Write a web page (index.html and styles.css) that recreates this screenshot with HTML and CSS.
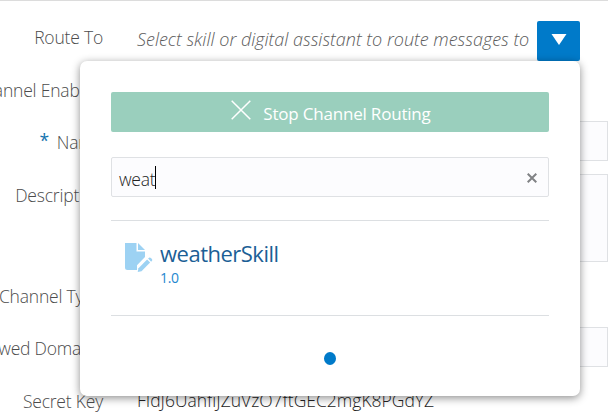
FILE: index.html
```html
<!DOCTYPE html>
<html lang="en">
<head>
<meta charset="utf-8">
<title>Channel</title>
<link rel="stylesheet" href="styles.css">
</head>
<body>
<main class="form">
  <div class="row row-route">
    <label class="label">Route To</label>
    <div class="select"><span class="placeholder">Select skill or digital assistant to route messages to</span>
      <button class="drop" aria-label="Open"><svg width="16" height="11" viewBox="0 0 16 11"><path d="M.5 0h15L8 11z" fill="#fff"/></svg></button>
    </div>
  </div>
  <div class="row row-switch"><label class="label">Channel Enabled</label></div>
  <div class="row"><label class="label"><span class="star">*</span>Name</label><div class="field"></div></div>
  <div class="row row-area"><label class="label">Description</label><div class="field"></div></div>
  <div class="row row-type"><label class="label">Channel Type</label></div>
  <div class="row"><label class="label">Allowed Domains</label><div class="field"></div></div>
  <div class="row"><label class="label">Secret Key</label><div class="secret">FIdJ6UahfiJZuVzO7ftGEC2mgK8PGdYZ</div></div>
</main>
<section class="popup">
  <button class="stop"><svg width="20" height="20" viewBox="0 0 20 20"><path d="M.7.7l18.6 18.6M19.3.7L.7 19.3" stroke="#fff" stroke-width="1.5"/></svg><span>Stop Channel Routing</span></button>
  <div class="search"><span class="query">weat</span><i class="caret"></i>
    <svg class="clear" width="10" height="10" viewBox="0 0 10 10"><path d="M.7.7l8.6 8.6M9.3.7L.7 9.3" stroke="#808285" stroke-width="2"/></svg>
  </div>
  <div class="result">
    <svg class="doc" width="28" height="31" viewBox="0 0 28 31"><g fill="#9dd2f3"><path d="M0 0h11.500v8.500H20V14L12 22.300V27H2.500Q0 27 0 24.500z"/><path d="M13 0l7 7h-7z"/><path d="M13.500 25.200l8.600-8.600 3 3-8.600 8.600-3.800.9z"/><path d="M23.100 15.600l.9-.9q1-.7 1.900.2l1 1q.9.900.1 1.900l-.9.900z"/></g></svg>
    <div><div class="name">weatherSkill</div><div class="version">1.0</div></div>
  </div>
  <div class="pager"><i class="dot"></i></div>
</section>
</body>
</html>
```
FILE: styles.css
```css
* { box-sizing: border-box; }
body {
  margin: 0;
  width: 608px;
  height: 413px;
  overflow: hidden;
  position: relative;
  background: #fff;
  border-top: 1px solid #dcdcdc;
  font-family: "Open Sans", "Noto Sans", sans-serif;
  font-size: 17.5px;
  font-weight: 300;
  color: #4c4c4c;
}
button { font: inherit; border: 0; padding: 0; margin: 0; }
svg { display: block; flex: none; }
.form { padding-top: 20px; display: flex; flex-direction: column; gap: 13px; }
.row { display: flex; height: 40px; gap: 26px; flex: none; }
.row-switch { height: 34px; }
.row-area { height: 88px; }
.row-type { height: 39px; }
.label {
  width: 103px;
  flex: none;
  display: flex;
  justify-content: flex-end;
  white-space: nowrap;
  line-height: 24px;
  padding-top: 9px;
  letter-spacing: -0.2px;
}
.row-route .label, .row-switch .label { padding-top: 4px; }
.star { color: #1473ae; font-weight: 400; margin: -2px 8px 0 0; }
.field { flex: 1; background: #fcfcfe; border: 1px solid #dfe1e4; }
.select { display: flex; width: 451px; justify-content: space-between; padding-left: 8px; }
.placeholder {
  font-style: italic;
  font-size: 18px;
  color: #5c5c5c;
  white-space: nowrap;
  line-height: 37px;
}
.drop {
  width: 43px;
  height: 40px;
  flex: none;
  border-radius: 2px;
  background: #007ac9;
  display: flex;
  align-items: center;
  justify-content: center;
  padding-bottom: 3px;
}
.secret { color: #222; padding: 8px 0 0 8px; line-height: 24px; }
.popup {
  position: absolute;
  left: 80px;
  top: 60px;
  width: 500px;
  height: 335px;
  padding: 31px;
  border-radius: 7px;
  background: #fff;
  box-shadow: 0 2px 8px rgba(0, 0, 0, .45);
  display: flex;
  flex-direction: column;
}
.stop {
  height: 40px;
  flex: none;
  border-radius: 2px;
  background: #9acfbd;
  color: #fff;
  display: flex;
  justify-content: center;
  gap: 12px;
  padding-left: 2px;
  font-size: 17px;
  font-weight: 400;
  letter-spacing: -0.2px;
}
.stop svg { margin-top: 8px; }
.stop span { line-height: 24px; margin-top: 10px; white-space: nowrap; }
.search {
  margin-top: 25px;
  height: 40px;
  flex: none;
  border: 1px solid #dfe1e4;
  border-radius: 2px;
  background: #fcfcfe;
  display: flex;
  align-items: center;
  padding: 0 11px 0 7px;
}
.query { color: #222; letter-spacing: -0.3px; line-height: 24px; padding-top: 3px; }
.caret { width: 1px; height: 23px; margin-top: 1px; background: #000; }
.clear { margin: 2px 0 0 auto; }
.result {
  margin-top: 23px;
  height: 96px;
  flex: none;
  border-top: 1px solid #dcdfe2;
  border-bottom: 1px solid #dcdfe2;
  display: flex;
  gap: 7px;
  padding: 22px 0 0 14px;
}
.name { color: #1c5f96; font-size: 22px; line-height: 26px; font-weight: 400; letter-spacing: -0.5px; margin-top: -3px; }
.version { color: #2487cf; font-size: 14px; line-height: 20px; font-weight: 400; letter-spacing: -0.3px; margin-top: 2px; }
.pager { display: flex; justify-content: center; padding-top: 36px; }
.dot { width: 12px; height: 13px; border-radius: 50%; background: #007ac9; }
```
